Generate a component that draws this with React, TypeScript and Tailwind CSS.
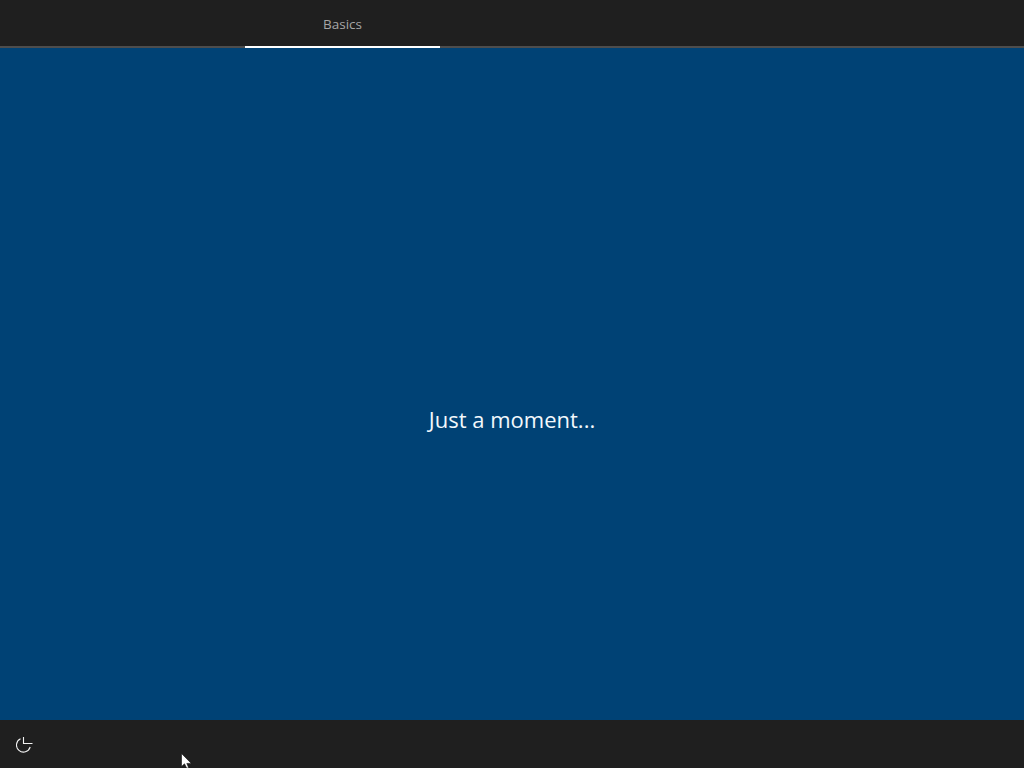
export default function App() {
  return (
    <div className="relative flex h-[768px] w-[1024px] flex-col overflow-hidden bg-[#004275] font-['Open_Sans','Liberation_Sans',sans-serif]">
      {/* top tabs */}
      <div className="flex h-12 shrink-0 border-b-2 border-[#4d4d4d] bg-[#1f1f1f] pl-[245px]">
        <div className="-mb-[2px] flex h-12 w-[195px] items-center justify-center border-b-2 border-white pt-[2px] text-[13.5px] text-[#a6a6a6]">
          Basics
        </div>
      </div>

      <div className="flex flex-1 items-center justify-center pt-[70px]">
        <p className="text-[22px] text-[#f2f8fc]">Just a moment...</p>
      </div>

      {/* bottom bar */}
      <div className="flex h-12 shrink-0 items-center bg-[#1f1f1f] pl-4">
        <svg className="mt-[2px]" width="17" height="16" viewBox="0 0 17 16" fill="none" stroke="#f2f2f2" strokeWidth="1.1">
          <path d="M14.2 10A7 7 0 1 1 4.5 1.7" />
          <path d="M7.5 0V6.5H16.5" />
        </svg>
      </div>

      {/* mouse pointer */}
      <svg className="absolute left-[181px] top-[753px]" width="11" height="15" viewBox="0 0 11 15">
        <path d="M0.5 0.5V13.5L3.5 10.8L5.6 15H7.8L5.8 10.4H10.3Z" fill="#ffffff" stroke="#111111" strokeWidth="0.6" />
      </svg>
    </div>
  );
}
